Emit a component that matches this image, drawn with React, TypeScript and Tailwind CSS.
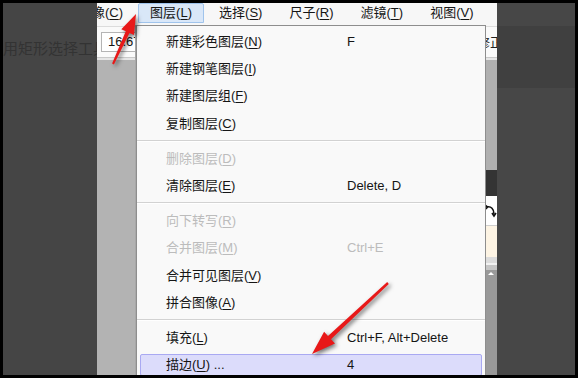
import React from "react";

type Item =
  | "sep"
  | {
      label: string;
      k: string;
      sc?: string;
      tail?: string;
      disabled?: boolean;
      active?: boolean;
    };

const items: Item[] = [
  { label: "新建彩色图层", k: "N", sc: "F" },
  { label: "新建钢笔图层", k: "I" },
  { label: "新建图层组", k: "F" },
  { label: "复制图层", k: "C" },
  "sep",
  { label: "删除图层", k: "D", disabled: true },
  { label: "清除图层", k: "E", sc: "Delete, D" },
  "sep",
  { label: "向下转写", k: "R", disabled: true },
  { label: "合并图层", k: "M", sc: "Ctrl+E", disabled: true },
  { label: "合并可见图层", k: "V" },
  { label: "拼合图像", k: "A" },
  "sep",
  { label: "填充", k: "L", sc: "Ctrl+F, Alt+Delete" },
  { label: "描边", k: "U", tail: " ...", sc: "4", active: true },
];

const menus = [
  { label: "图像", k: "C" },
  { label: "图层", k: "L", open: true },
  { label: "选择", k: "S" },
  { label: "尺子", k: "R" },
  { label: "滤镜", k: "T" },
  { label: "视图", k: "V" },
];

function Mnemonic({ label, k }: { label: string; k: string }) {
  return (
    <>
      {label}(<span className="underline underline-offset-2">{k}</span>)
    </>
  );
}

function LayerMenu() {
  return (
    <div className="absolute left-[39px] top-[22px] w-[350px] h-[360px] bg-[#f9f9f9] border border-[#8e8e8e] pt-[2px] shadow-[-1px_0_0_#a8a8a8]">
      {items.map((it, i) =>
        it === "sep" ? (
          <div key={i} className="h-[7.7px] flex items-center">
            <div className="w-full border-t border-[#d2d2d2] border-b border-b-white" />
          </div>
        ) : (
          <div key={i} className="h-[27.3px] mx-[3px] flex items-center">
            <div
              className={`w-full h-[22px] flex items-center pl-[25px] border rounded-[2px] text-[13px] ${
                it.active ? "bg-[#dcdcfb] border-[#a9a9f2]" : "border-transparent"
              } ${it.disabled ? "text-[#bcbcbc]" : "text-[#151515]"}`}
            >
              <span className="w-[181px] shrink-0 whitespace-nowrap">
                <Mnemonic label={it.label} k={it.k} />
                {it.tail}
              </span>
              <span className="whitespace-nowrap">{it.sc}</span>
            </div>
          </div>
        )
      )}
    </div>
  );
}

function RotateIcon() {
  return (
    <svg width="12" height="14" viewBox="0 0 12 14" fill="none" stroke="#111" strokeWidth="1.6">
      <path d="M2 3 C6 2 9 5 9 10" />
      <path d="M0.5 1.5 L2.5 3 L1 5" />
      <path d="M7 9 L9 12 L11 9" />
    </svg>
  );
}

export default function App() {
  return (
    <div
      className="relative w-[578px] h-[378px] bg-black p-[3px] overflow-hidden"
      style={{ fontFamily: "'Liberation Sans', 'Noto Sans CJK SC', sans-serif" }}
    >
      <div className="flex h-full">
        {/* darkened left edge */}
        <div className="w-[94px] shrink-0 bg-[#454545] overflow-hidden">
          <div className="h-[36px]" />
          <div className="h-[20px] flex items-center text-[15px] text-[#333] whitespace-nowrap">
            用矩形选择工具
          </div>
        </div>

        {/* app window */}
        <div className="relative w-[400px] shrink-0 overflow-hidden flex flex-col bg-[#b3b3b3]">
          <div className="h-[24px] shrink-0 bg-[#f7f7f7] border-b border-[#dcdcdc] flex items-start gap-[3px] ml-[-30px] text-[13px] text-[#151515]">
            {menus.map((m) => (
              <div
                key={m.label}
                className={`h-[20px] px-[11px] flex items-center whitespace-nowrap border rounded-t-[2px] ${
                  m.open ? "bg-[#d9e7f8] border-[#a0c4ec]" : "border-transparent"
                }`}
              >
                <Mnemonic label={m.label} k={m.k} />
              </div>
            ))}
          </div>

          <div className="h-[30px] shrink-0 bg-[#fafafa] flex items-center relative">
            <div className="ml-[4px] w-[60px] h-[20px] bg-white border border-[#b4b4b4] flex items-center pl-[6px] text-[13px] text-[#151515]">
              16.67%
            </div>
            <div className="absolute left-[380px] top-[6px] text-[13px] text-[#222] whitespace-nowrap">修正</div>
          </div>
          <div className="h-[1px] shrink-0 bg-[#c9c9c9]" />
          <div className="h-[2px] shrink-0 bg-[#e6e6e6]" />

          <div className="flex-1 flex">
            <div className="flex-1 bg-[#b3b3b3]" />
            <div className="w-[13px] flex flex-col">
              <div className="h-[110px] bg-[#b0b0b0]" />
              <div className="h-[26px] bg-[#343434]" />
              <div className="h-[29px] bg-white flex items-center justify-end">
                <RotateIcon />
              </div>
              <div className="h-[1px] bg-[#cfcfcf]" />
              <div className="h-[31px] bg-[#fdf4e4]" />
              <div className="h-[6px] bg-[#dcdcdc]" />
              <div className="h-[2px] bg-[#f2f2f2]" />
              <div className="h-[5px] bg-[#c6c6c6]" />
              <div className="flex-1 bg-[#999999] flex justify-center pt-[2px]">
                <div className="w-0 h-0 border-l-[3px] border-r-[3px] border-b-[3px] border-l-transparent border-r-transparent border-b-white" />
              </div>
            </div>
          </div>

          <LayerMenu />
        </div>

        {/* darkened right edge */}
        <div className="flex-1 flex flex-col">
          <div className="h-[23px] bg-[#474747]" />
          <div className="h-[62px] bg-[#404040]" />
          <div className="flex-1 bg-[#474747]" />
        </div>
      </div>

      {/* annotation arrows */}
      <svg
        className="absolute inset-0 pointer-events-none drop-shadow-[2px_2px_2px_rgba(0,0,0,0.55)]"
        width="578"
        height="378"
        viewBox="0 0 578 378"
      >
        <polygon
          fill="#e81818"
          points="136,14 134,35.1 129.5,33 113.9,64.4 112.1,63.6 125.8,31.3 121.3,29.2"
        />
        <polygon
          fill="#e81818"
          points="312,354 335,343.5 331,339.2 388.8,283.9 387.2,282.1 328,336 324.1,331.8"
        />
      </svg>
    </div>
  );
}
